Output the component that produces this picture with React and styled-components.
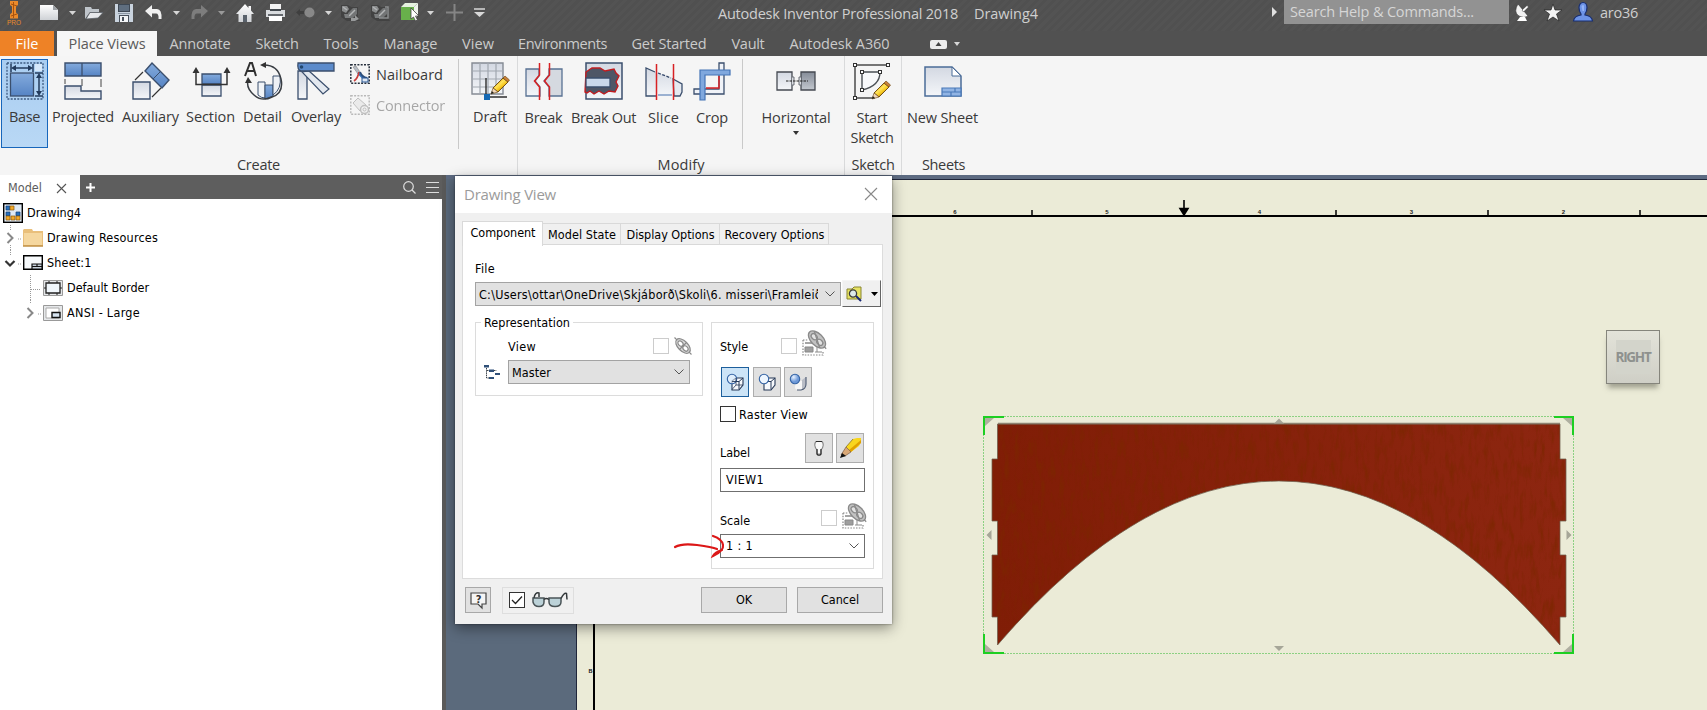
import React, { useLayoutEffect, useRef, useState } from "react";
import styled, { createGlobalStyle, css } from "styled-components";

const uiFont = '"Open Sans", "Noto Sans", sans-serif';
const dialogFont = '"DejaVu Sans Condensed", "DejaVu Sans", sans-serif';

const GlobalStyle = createGlobalStyle`
  *, *::before, *::after { box-sizing: border-box; }
  body { margin: 0; background: #5b6a7c; overflow: hidden; }
  svg { display: block; flex: none; overflow: visible; }
`;

/* ---------- text that is tracked to an exact width ---------- */
const TextBox = styled.span`
  display: block;
  flex: none;
  white-space: pre;
  width: ${(p) => p.$w}px;
  line-height: 18px;
`;

function Text({ w, children }) {
  const ref = useRef(null);
  const [spacing, setSpacing] = useState(0);
  useLayoutEffect(() => {
    const range = document.createRange();
    range.selectNodeContents(ref.current);
    const natural = range.getBoundingClientRect().width;
    setSpacing((w - natural) / String(children).length);
  }, [w, children]);
  return (
    <TextBox ref={ref} $w={w} style={{ letterSpacing: `${spacing}px` }}>
      {children}
    </TextBox>
  );
}

/* ---------- application frame ---------- */
const Window = styled.div`
  position: relative;
  display: flex;
  flex-direction: column;
  width: 1707px;
  height: 710px;
  overflow: hidden;
  font-family: ${uiFont};
`;

const TitleBar = styled.header`
  display: flex;
  height: 31px;
  background: repeating-linear-gradient(135deg, #505050 0 3px, #535353 3px 6px);
  color: #cfcfcf;
  font-size: 14.5px;
`;

const QuickAccess = styled.div`
  display: flex;
  align-items: center;
  width: 718px;
  height: 25px;
`;

const Tool = styled.span`
  display: flex;
  flex: none;
  align-items: center;
  justify-content: center;
  margin-left: ${(p) => p.$gap}px;
  width: ${(p) => p.$w}px;
`;

const Caption = styled.div`
  display: flex;
  gap: 16px;
  width: 554px;
  padding-top: 5px;
`;

const SearchBox = styled.div`
  width: 225px;
  height: 24px;
  margin: 0 6px 0 7px;
  padding: 3px 0 0 6px;
  background: #929292;
  color: #d6d6d6;
`;

const UserName = styled.div`
  padding: 4px 0 0 7px;
`;

const IconSlot = styled.span`
  display: block;
  padding-top: ${(p) => p.$top}px;
  margin-right: ${(p) => p.$after || 0}px;
`;

const TabBar = styled.nav`
  display: flex;
  height: 25px;
  background: #515151;
`;

const RibbonTab = styled.div`
  display: flex;
  justify-content: center;
  align-items: center;
  width: ${(p) => p.$w}px;
  height: 25px;
  padding-bottom: 0;
  font-size: 14.5px;
  color: #cbcbcb;
  ${(p) => p.$kind === "file" && css`background: #ee8226; color: #fff; margin-right: 3px;`}
  ${(p) => p.$kind === "active" && css`background: #f6f6f6; color: #5a5a5a;`}
`;

const RibbonMinimize = styled.div`
  display: flex;
  align-items: center;
  gap: 7px;
  padding: 1px 0 0 28px;
`;

const Ribbon = styled.section`
  display: flex;
  height: 119px;
  background: #f5f5f5;
  color: #3a3a3a;
  font-size: 14.5px;
`;

const Panel = styled.div`
  display: flex;
  flex-direction: column;
  align-items: center;
  width: ${(p) => p.$w}px;
  border-right: ${(p) => (p.$last ? "0" : "1px solid #d9dadb")};
`;

const PanelTools = styled.div`
  display: flex;
  align-items: flex-start;
  width: 100%;
  height: 100px;
  padding: 3px 0 0 ${(p) => p.$left || 0}px;
`;

const Separator = styled.i`
  width: 1px;
  height: 90px;
  margin-left: ${(p) => p.$gap}px;
  background: #c9c9c9;
`;

const BigButton = styled.div`
  display: flex;
  flex: none;
  flex-direction: column;
  align-items: center;
  width: ${(p) => p.$w}px;
  height: 89px;
  margin-left: ${(p) => p.$gap || 0}px;
  padding-top: 2px;
  border: 1px solid transparent;
  ${(p) => p.$active && css`background: linear-gradient(#a9cdf1, #b9d8f5); border-color: #1766bb;`}
`;

const IconFrame = styled.span`
  display: flex;
  align-items: center;
  height: 38px;
  margin-bottom: 8px;
`;

const SecondLine = styled.span`
  margin-top: 2px;
`;

const SmallTools = styled.div`
  display: flex;
  flex-direction: column;
  gap: 11px;
  padding: 5px 0 0 5px;
`;

const SmallButton = styled.div`
  display: flex;
  align-items: center;
  gap: 6px;
  height: 20px;
  opacity: ${(p) => (p.$disabled ? 0.42 : 1)};
`;

const Workspace = styled.main`
  display: flex;
  height: 535px;
`;

/* ---------- model browser ---------- */
const Browser = styled.aside`
  width: 446px;
  border-right: 4px solid #5a5a5a;
  background: #fff;
  color: #000;
  font: 12.5px ${dialogFont};
`;

const BrowserHead = styled.div`
  display: flex;
  align-items: center;
  height: 24px;
  padding-right: 3px;
  background: #5e5e5e;
`;

const BrowserTab = styled.div`
  display: flex;
  align-items: center;
  gap: 15px;
  width: 80px;
  height: 24px;
  margin-right: 6px;
  padding: 1px 0 0 8px;
  background: #fff;
  color: #5c5c5c;
`;

const Spacer = styled.span`
  flex: 1;
`;

const Tree = styled.div`
  padding-top: 1px;
`;

const TreeRow = styled.div`
  display: flex;
  align-items: center;
  gap: 4px;
  height: 25px;
  padding-left: ${(p) => p.$indent}px;
`;

const Twisty = styled.span`
  display: flex;
  align-items: center;
  width: 16px;
  height: 25px;
  margin-right: -4px;
`;

/* ---------- drawing canvas ---------- */
const Canvas = styled.div`
  position: relative;
  width: 1261px;
  height: 535px;
  background: #5b6a7c;
`;

const ViewCube = styled.div`
  position: absolute;
  left: 1160px;
  top: 155px;
  display: flex;
  align-items: center;
  justify-content: center;
  width: 54px;
  height: 54px;
  border: 1px solid #85857c;
  background: linear-gradient(#e3e3d9, #cfcfc6);
  box-shadow: 0 6px 5px -2px rgba(90, 90, 75, 0.5);
  color: #8e918e;
  font: bold 13.5px ${uiFont};
`;

const CubeFace = styled.span`
  display: flex;
  align-items: center;
  justify-content: center;
  width: 35px;
  height: 34px;
  background: #d3d4cb;
`;

/* ---------- drawing view dialog ---------- */
const Dialog = styled.div`
  position: absolute;
  left: 455px;
  top: 176px;
  width: 437px;
  height: 448px;
  background: #f0f0f0;
  box-shadow: 0 4px 13px rgba(0, 0, 0, 0.42), 0 0 2px rgba(0, 0, 0, 0.45);
  color: #000;
  font: 12.5px ${dialogFont};
`;

const DialogTitle = styled.div`
  display: flex;
  justify-content: space-between;
  height: 37px;
  padding: 9px 15px 0 9px;
  background: #fff;
  color: #9b9b9b;
  font: 15px ${uiFont};
`;

const DialogTabs = styled.div`
  display: flex;
  align-items: flex-end;
  height: 32px;
  padding: 8px 0 0 7px;
`;

const DialogTab = styled.div`
  display: flex;
  justify-content: center;
  width: ${(p) => p.$w}px;
  height: 22px;
  padding: 2px 0 0 1px;
  border: 1px solid #d9d9d9;
  border-left-width: 0;
  ${(p) => p.$active && css`
    height: 25px;
    margin-bottom: -1px;
    border-left-width: 1px;
    border-bottom: 0;
    background: #fff;
    z-index: 1;
  `}
`;

const DialogPage = styled.div`
  display: flex;
  flex-direction: column;
  width: 421px;
  height: 335px;
  margin: -1px 0 0 7px;
  padding: 15px 0 0 12px;
  border: 1px solid #dcdcdc;
  background: #fff;
`;

const FileRow = styled.div`
  display: flex;
  align-items: center;
  gap: 1px;
  margin-top: 2px;
  height: 27px;
`;

const Field = styled.div`
  display: flex;
  align-items: center;
  justify-content: space-between;
  width: ${(p) => p.$w}px;
  height: 24px;
  padding: 0 5px 0 ${(p) => (p.$plain ? 5 : 3)}px;
  border: 1px solid ${(p) => (p.$plain ? "#6f6f6f" : "#a3a3a3")};
  background: ${(p) => (p.$plain ? "#fff" : "#e1e1e1")};
`;

const PathClip = styled.span`
  width: 339px;
  padding-top: 2px;
  overflow: hidden;
`;

const BrowseButton = styled.div`
  display: flex;
  align-items: center;
  justify-content: space-between;
  width: 39px;
  height: 27px;
  padding: 0 2px 0 4px;
  border: 1px solid #f5f5f5;
  border-right-color: #646464;
  border-bottom-color: #646464;
  background: #f0f0f0;
`;

const Groups = styled.div`
  display: flex;
  align-items: flex-start;
  gap: 8px;
  margin-top: 15px;
`;

const Group = styled.div`
  width: ${(p) => p.$w}px;
  height: ${(p) => p.$h}px;
  padding-left: ${(p) => p.$left}px;
  border: 1px solid #dcdcdc;
`;

const Legend = styled.div`
  width: 92px;
  margin-top: -9px;
  padding-left: 3px;
  background: #fff;
`;

const Line = styled.div`
  display: flex;
  align-items: center;
  gap: ${(p) => p.$gap || 0}px;
  height: ${(p) => p.$h}px;
  margin-top: ${(p) => p.$top || 0}px;
  margin-left: ${(p) => p.$left || 0}px;
`;

const Check = styled.span`
  display: flex;
  flex: none;
  align-items: center;
  justify-content: center;
  width: 16px;
  height: 16px;
  margin-left: ${(p) => p.$left || 0}px;
  margin-right: ${(p) => p.$right || 0}px;
  border: 1px solid ${(p) => (p.$dim ? "#cccccc" : "#333")};
  background: #fff;
`;

const ToolButton = styled.span`
  display: flex;
  flex: none;
  align-items: center;
  justify-content: center;
  width: 28px;
  height: 30px;
  border: 1px solid #adadad;
  background: #e1e1e1;
  ${(p) => p.$active && css`border-color: #1d5f9c; background: #cce4f7;`}
`;

const DialogFooter = styled.div`
  display: flex;
  align-items: center;
  height: 26px;
  margin: 8px 0 0 10px;
`;

const PreviewToggle = styled.div`
  display: flex;
  flex: none;
  align-items: center;
  width: 72px;
  height: 27px;
  margin: 0 127px 0 1px;
  padding-left: 6px;
  border: 1px solid #dedede;
`;

const PushButton = styled.div`
  display: flex;
  flex: none;
  align-items: center;
  justify-content: center;
  width: ${(p) => p.$w}px;
  height: 26px;
  margin-right: 10px;
  border: 1px solid #a8a8a8;
  background: #e1e1e1;
`;

const RedMark = styled.span`
  position: absolute;
  left: 218px;
  top: 358px;
`;

/* ---------- icons ---------- */
const Svg = ({ w, h, children, ...rest }) => (
  <svg width={w} height={h} viewBox={`0 0 ${w} ${h}`} fill="none" {...rest}>{children}</svg>
);

const DefsSvg = styled.svg`
  position: absolute;
`;

const Defs = () => (
  <DefsSvg width="0" height="0">
    <defs>
      <linearGradient id="blue" x2="0" y2="1"><stop stopColor="#84abdd" /><stop offset="1" stopColor="#5684c4" /></linearGradient>
      <linearGradient id="gray" x2="0" y2="1"><stop stopColor="#d3d8e2" /><stop offset="1" stopColor="#f4f6f9" /></linearGradient>
      <linearGradient id="dark" x2="0" y2="1"><stop stopColor="#858c98" /><stop offset="1" stopColor="#c3c8cf" /></linearGradient>
      <linearGradient id="silver" x2="0" y2="1"><stop stopColor="#ffffff" /><stop offset="1" stopColor="#cfd2d6" /></linearGradient>
      <linearGradient id="gold" x1=".25" y1=".25" x2=".75" y2=".8"><stop stopColor="#e0a008" /><stop offset=".35" stopColor="#ffe45c" /><stop offset=".65" stopColor="#f7c81e" /><stop offset="1" stopColor="#8f5c05" /></linearGradient>
      <radialGradient id="ball" cx=".35" cy=".3"><stop stopColor="#e8f2ff" /><stop offset="1" stopColor="#6c98d8" /></radialGradient>
    </defs>
  </DefsSvg>
);

const ink = "#3b4f6d";
const Caret = ({ c = "#d6d6d6", w = 7 }) => <Svg w={w} h={4}><path d={`M0 0H${w}L${w / 2} 4Z`} fill={c} /></Svg>;
const Chevron = () => <Svg w={10} h={6}><path d="M.5.5 5 5 9.5.5" stroke="#555" /></Svg>;

const Logo = () => (
  <Svg w={14} h={25}>
    <path d="M3 1h8v4L9 6.500v6l2 2v4H3v-4l2-2v-6L3 5Z" fill="#e98a2b" />
    <path d="M6.500 2v16M4 4l6 2M4 16l6-2" stroke="#a7520d" />
    <text x="7" y="25" textAnchor="middle" fontSize="6.5" textLength="14" fontFamily="Liberation Sans" fill="#e98a2b">PRO</text>
  </Svg>
);
const NewFile = () => <Svg w={18} h={15}><path d="M0 0h13l5 5v10H0Z" fill="url(#silver)" /><path d="M13 0v5h5" fill="#9da1a6" /></Svg>;
const OpenFile = () => <Svg w={18} h={14}><path d="M0 13V1h6l1 2h7v3H5Z" fill="#bfc5cb" /><path d="M1 13 5 6.5h13L13 12Z" fill="#e6e8eb" stroke="#555b63" strokeWidth=".7" /></Svg>;
const Save = () => <Svg w={18} h={18}><path d="M0 0h18v18H0Z" fill="#c9d3de" /><path d="M3 0h12v8H3Z" fill="#3e4854" /><path d="M4 1h10v6H4Z" fill="#5f6e7f" /><path d="M3 9h12v1H3Z" fill="#8b97a5" /><path d="M4 11h10v7H4Z" fill="#48515c" /><path d="M5 12h8v6H5Z" fill="#f3f5f7" /><path d="M7 13h2v4H7Z" fill="#48515c" /></Svg>;
const Undo = ({ c = "#f0f0f0", flip }) => <Svg w={17} h={15}><g transform={flip ? "matrix(-1 0 0 1 17 0)" : undefined}><path d="M0 6 7 0v4h5q5 0 4.500 10h-3Q14 8.500 11 8.500H7v4Z" fill={c} /></g></Svg>;
const Home = () => <Svg w={18} h={18}><path d="M9 0 0 10h2.500v8h13v-8H18l-3-3.500V2h-2.500v2Z" fill="url(#silver)" /><path d="M7 11h4v7H7Z" fill="#59616b" /></Svg>;
const Print = () => <Svg w={19} h={17}><path d="M4 0h11v5H4Z" fill="#f3f3f3" /><path d="M0 6h19v7H0Z" fill="#d9dcdf" /><path d="M4 5h11v2H4Z" fill="#43494f" /><path d="M3 12h13v5H3Z" fill="#fff" /><path d="M2 11h15" stroke="#3d4247" strokeWidth="1.500" /></Svg>;
const Record = () => <Svg w={19} h={11}><path d="M0 5.500 4 2v2h4v3H4v2Z" fill="#3f3f3f" /><circle cx="13.500" cy="5.500" r="5" fill="#888" /></Svg>;
const Update = ({ plain }) => (
  <Svg w={19} h={17}>
    <path d="M0 1h7l3 2h7v10l2 4H6l-6-4Z" fill="#424242" />
    <path d="M1 2h5l2 3-3 4-4-2Z" fill="#8a8c8d" /><path d="m7 9 5-5h4v6l-4 4H6Z" fill="#727475" />
    <path d="m8 12 6-6M2 3l4 3" stroke="#b3b5b6" strokeWidth="1.500" /><path d="M3 10h4l2 4H4Z" fill="#7c7e7f" />
    {plain ? <path d="M14 3h3v11H8" stroke="#8b8d8e" strokeWidth="1.500" /> : <path d="M10 14h4v-3l4 4-4 2h-4Z" fill="#989a9b" />}
  </Svg>
);
const Cube = () => (
  <Svg w={19} h={19}>
    <path d="m1 4 4-4h13l-4 4Z" fill="#e5f1df" /><path d="m14 4 4-4v12l-4 5Z" fill="#eef3ec" /><path d="M1 4h13v13H1Z" fill="#68b04b" />
    <path d="M11 5v11l2.500-2 2 4 2-1-2-4h3.500Z" fill="#fff" stroke="#444" strokeWidth=".8" />
  </Svg>
);
const Plus = () => <Svg w={17} h={17}><path d="M8.500 0v17M0 8.500h17" stroke="#858585" strokeWidth="2" /></Svg>;
const More = () => <Svg w={11} h={9}><path d="M0 1h11" stroke="#d8d8d8" strokeWidth="1.500" /><path d="M0 4h11L5.500 9Z" fill="#d8d8d8" /></Svg>;
const Dish = () => (
  <Svg w={15} h={18}>
    <path d="M3 1Q-2 9 4 13q5 3 9 0Z" fill="#f2f2f2" stroke="#222" strokeWidth=".5" />
    <path d="m7 7 5-4.500 1.500 1.500L8.500 9Z" fill="#fff" stroke="#333" strokeWidth=".5" />
    <path d="M5 14h5l2 4H2Z" fill="#fff" />
  </Svg>
);
const Star = () => <Svg w={18} h={17}><path d="m9 0 2 6h7l-5.500 4L15 17l-6-4-6 4 2.500-7L0 6h7Z" fill="#f3f3f3" stroke="#222" strokeWidth=".7" /></Svg>;
const User = () => <Svg w={20} h={19}><path d="M6 5.500a4 5 0 0 1 8 0q0 4-2 6.500v1q7 1 7.500 6H.5Q1 14 8 13v-1Q6 9.500 6 5.500Z" fill="#6d93e6" stroke="#182e71" strokeWidth="1.200" /><path d="M8.500 4q2-2 2.500 0v5H9.500Z" fill="#94b4f6" /></Svg>;

const Pencil = ({ x = 0, y = 0 }) => (
  <g transform={`translate(${x} ${y})`}>
    <path d="M2 12 12 2l5 4-10 10Z" fill="url(#gold)" stroke="#67430b" strokeWidth=".9" />
    <path d="M2 12 7 16l-7 2Z" fill="#f1d6b8" stroke="#67430b" strokeWidth=".6" />
    <path d="m12 2 2-2 4.500 4L17 6Z" fill="#c9803a" stroke="#67430b" strokeWidth=".6" />
    <path d="m0 18 .8-3 2.200 2Z" fill="#222" />
  </g>
);

const BaseIcon = () => (
  <Svg w={38} h={38}>
    <rect x="1" y="1" width="36" height="36" stroke="#3d5a80" strokeWidth="1.300" strokeDasharray="2 1.300" />
    <rect x="29" y="2" width="7" height="7" fill="#d6e8fa" />
    <rect x="4.500" y="11" width="23" height="23" fill="url(#blue)" stroke={ink} strokeWidth="1.300" />
    <path d="M5 2v8M27 2v8M7 6h18M29 11h8M29 34h8M33 13v19" stroke="#233b5c" strokeWidth="1.500" />
    <path d="m5 6 5-3v6ZM27 6l-5-3v6ZM33 11l-3 5h6ZM33 34l-3-5h6Z" fill="#233b5c" />
  </Svg>
);
const ProjectedIcon = () => (
  <Svg w={38} h={38}>
    <path d="M1 1h36v13H1Z" fill="url(#blue)" stroke={ink} strokeWidth="1.400" /><path d="M18 1v13" stroke={ink} strokeWidth="1.300" />
    <path d="M1 17v5M18 17v7M37 17v8" stroke="#454545" /><path d="M1 24h16v5h20v8H1Z" fill="url(#gray)" stroke={ink} strokeWidth="1.400" />
  </Svg>
);
const AuxiliaryIcon = () => (
  <Svg w={38} h={38}>
    <path d="m20 1 17 17-7 8-17-17Z" fill="url(#blue)" stroke={ink} strokeWidth="1.400" /><path d="m28 10-7 7" stroke={ink} />
    <path d="M1 20h17v17H1Z" fill="url(#gray)" stroke={ink} strokeWidth="1.400" /><path d="m3 18 8-8M20 35l9-9" stroke="#333" strokeWidth="1.200" />
  </Svg>
);
const SectionIcon = () => (
  <Svg w={38} h={38}>
    <path d="M10 12h19v10H10Z" fill="url(#blue)" stroke={ink} strokeWidth="1.300" /><path d="M10 23h19v11H10Z" fill="url(#gray)" stroke={ink} strokeWidth="1.300" />
    <path d="M4 9v13.500h31V9" stroke="#333" strokeWidth="1.500" /><path d="m4 5 3.500 6h-7ZM35 5l3.500 6h-7Z" fill="#333" />
  </Svg>
);
const DetailIcon = () => (
  <Svg w={38} h={38}>
    <path d="M14 20h7v16q-4 0-7-3Z" fill="#f1f4f8" stroke={ink} /><path d="M21 23h8v11l-8 3Z" fill="url(#blue)" stroke={ink} /><path d="M29 14h7q2 13-7 19Z" fill="#edf0f5" stroke={ink} />
    <path d="M20 3q14 0 17 14t-9 18q-10 5-18-2T4 19" stroke="#383c42" strokeWidth="1.500" />
    <path d="m16 3 6-3v6ZM4 15l-3 6h7Z" fill="#333" />
    <path d="m1 14 5-13h2l4 13M3 9h7" stroke="#303030" strokeWidth="2" />
  </Svg>
);
const OverlayIcon = () => (
  <Svg w={38} h={38}>
    <path d="M1 9h9v28H1Z" fill="url(#gray)" stroke={ink} strokeWidth="1.300" />
    <path d="m5 10 7-1 20 18-6 5Z" fill="#e3e8ef" stroke={ink} strokeWidth="1.200" />
    <path d="M1 1h36v8H4Q0 8 1 1Z" fill="#5c8bcb" stroke={ink} strokeWidth="1.300" /><circle cx="4.500" cy="5" r="1.800" fill="#24486f" />
  </Svg>
);
const NailboardIcon = () => (
  <Svg w={20} h={20}>
    <rect x=".8" y=".8" width="18.400" height="18.400" stroke="#27303d" strokeWidth="1.500" strokeDasharray="2 1.300" />
    <path d="m3 3 3-1 4 6-2 2Z" fill="#b5bcc5" stroke="#777" strokeWidth=".5" /><path d="m8 9 8 8" stroke="#3672bc" strokeWidth="2" />
    <path d="M9 8q-1 6-5 9" stroke="#c83e3b" strokeWidth="1.600" /><path d="M10 8q2 5 7 6" stroke="#2b4d7b" strokeWidth="2" /><rect x="12" y="14" width="6" height="4" fill="#dce7f5" stroke="#2a5791" />
  </Svg>
);
const ConnectorIcon = () => (
  <Svg w={20} h={20}>
    <rect x=".8" y=".8" width="18.400" height="18.400" stroke="#686868" strokeWidth="1.400" strokeDasharray="2 1.300" />
    <path d="m3 8 5-5 8 7-6 6Z" fill="#ddd" stroke="#777" /><circle cx="14.500" cy="14.500" r="4" fill="#eee" stroke="#777" strokeWidth="1.500" /><circle cx="14.500" cy="14.500" r="1.500" stroke="#777" />
  </Svg>
);
const DraftIcon = () => (
  <Svg w={38} h={38}>
    <path d="M1 1h31v31H1Z" fill="url(#gray)" stroke="#858b94" strokeWidth="1.400" /><path d="M9 1v31M17 1v31M25 1v31M1 9h31M1 17h31M1 25h31" stroke="#a1a7b0" strokeWidth="1.200" />
    <path d="M15 16v19h21" stroke="#2e2e2e" strokeWidth="1.400" /><path d="M13 32h6v6h-6Z" fill="#1669b3" /><Pencil x={20} y={14} />
  </Svg>
);
const BreakIcon = () => (
  <Svg w={38} h={38}>
    <path d="M1 7h13v7l-4 5 5 6v9H1Z" fill="url(#gray)" stroke="#587193" strokeWidth="1.300" /><path d="M24 7h13v27H24v-9l-5-6 5-6Z" fill="#d5d9e0" stroke="#587193" strokeWidth="1.300" />
    <path d="M14.500 1v12l-5 6 5 6v13M24.500 1v12l-5 6 5 6v13" stroke="#d82124" strokeWidth="1.500" />
  </Svg>
);
const BreakOutIcon = () => (
  <Svg w={38} h={38}>
    <path d="M1 1h36v36H1Z" fill="url(#gray)" stroke={ink} strokeWidth="1.500" />
    <path d="M1 10 7 6h8l5 3 9-2 2 4 3 3-3 6 2 4-3 6-6-1-5 3-5-3-5 3-4-3-3 2-2-1Z" fill="#4e5666" stroke="#c01c20" strokeWidth="1.400" />
    <path d="M1 16h24v9H1Z" fill="#c9d8eb" stroke={ink} strokeWidth="1.300" />
  </Svg>
);
const SliceIcon = () => (
  <Svg w={38} h={38}>
    <path d="m1 6 10 4v24H1ZM11 10l16 6v18H11Z" fill="url(#gray)" /><path d="M11 34H1V6l9 4" stroke={ink} strokeWidth="1.300" /><path d="m28 17 9 5v8l-2 4h-6Z" fill="#e5e9f0" stroke={ink} strokeWidth="1.300" />
    <path d="m13 11 13 5" stroke="#35486a" strokeWidth="1.300" strokeDasharray="3 1.500" /><path d="M13 33h14" stroke="#9bb1d1" strokeWidth="2" />
    <path d="M11.500 2v36M28.500 2v36" stroke="#d82124" strokeWidth="1.500" />
  </Svg>
);
const CropIcon = () => (
  <Svg w={38} h={38}>
    <path d="M26 1h5v31H1v-5h25Z" fill="#f0f3f8" stroke={ink} strokeWidth="1.300" /><path d="M26 14v12H13" stroke="#d82124" strokeWidth="1.500" />
    <path d="M7 38V8h30v5H12v25Z" fill="#80a8de" stroke="#4474b6" strokeWidth="1.200" />
  </Svg>
);
const HorizontalIcon = () => (
  <Svg w={40} h={22}>
    <path d="M1 2h15v18H1Z" fill="url(#gray)" stroke="#454a52" strokeWidth="1.300" /><path d="M25 2h14v18H25Z" fill="url(#dark)" stroke="#454a52" strokeWidth="1.300" />
    <path d="M16 7h2v8h-2M25 7h-2v8h2" fill="#d9dce1" stroke="#6a6f77" /><path d="M10 11h22" stroke="#222" strokeWidth="1.200" strokeDasharray="2.500 1" />
  </Svg>
);
const SketchIcon = () => (
  <Svg w={38} h={38}>
    <path d="M2 3h33M2 3v33h20" stroke="#4b4b4b" strokeWidth="1.500" /><path d="M9 10h18q0 14-18 18Z" fill="#f7f8fa" stroke="#4b5055" strokeWidth="1.400" />
    {[[2, 3], [35, 3], [2, 36], [9, 10], [27, 10], [9, 28]].map(([x, y]) => <rect key={`${x}-${y}`} x={x - 1.5} y={y - 1.5} width="3" height="3" fill="#fff" stroke="#333" />)}
    <Pencil x={19} y={19} />
  </Svg>
);
const SheetIcon = () => (
  <Svg w={38} h={38}>
    <path d="M1 5h27l9 9v20H1Z" fill="url(#gray)" stroke="#4b6c98" strokeWidth="1.500" /><path d="M28 5v9h9Z" fill="#fff" stroke="#4b6c98" />
    <path d="M18 26h19v8H18ZM18 30h19M31 26v4M27 30v4" fill="#91b4e4" stroke="#4978b7" strokeWidth="1.200" />
  </Svg>
);

const DrawingIcon = () => (
  <Svg w={20} h={20}>
    <rect x=".7" y=".7" width="18.600" height="18.600" fill="#dfe9f3" stroke="#000" strokeWidth="1.400" />
    <path d="M3 3h4v4H3ZM3 9h4v4H3ZM13 9h4v4h-4Z" fill="#2770bd" stroke="#143e70" strokeWidth=".7" />
    <path d="M7 3h4v4H7ZM3 13h4v4H3ZM8 13h4v4H8ZM13 13h4v4h-4Z" fill="#f2a929" stroke="#8b570c" strokeWidth=".7" />
  </Svg>
);
const FolderIcon = () => <Svg w={20} h={19}><path d="M0 18V2l1-1h8l1 2h10v15Z" fill="#e9bf7b" /><path d="M1 5h18v12H1Z" fill="#f5d79f" /><path d="M0 18h20" stroke="#c09044" strokeWidth="1.500" /></Svg>;
const TreeSheetIcon = () => <Svg w={20} h={15}><path d="M.7.7h18.600v13.600H.7Z" fill="#f6f9fb" stroke="#000" strokeWidth="1.400" /><path d="M9 9h10v5H9ZM9 11.500h10M14 9v2.500" fill="#c6d0db" stroke="#111" strokeWidth="1.200" /></Svg>;
const BorderIcon = () => <Svg w={20} h={16}><path d="M.5.5h19v15H.5Z" fill="#e5e7e9" stroke="#999" /><path d="M3 3h14v10H3Z" fill="#f0f6fb" stroke="#222" strokeWidth="1.300" /><path d="M6 1v2M14 1v2M6 13v2M14 13v2M1 8h2M17 8h2" stroke="#222" /></Svg>;
const TitleBlockIcon = () => <Svg w={20} h={16}><path d="M.5.5h19v15H.5Z" fill="#e5e7e9" stroke="#999" /><path d="M3 3h13v10H3Z" fill="#fff" stroke="#aaa" /><path d="M9 7.500h8v5H9Z" fill="#d6e3ef" stroke="#111" strokeWidth="1.400" /></Svg>;

const LinkIcon = () => (
  <Svg w={18} h={18}>
    <g transform="rotate(45 9 9)" stroke="#8a8a8a" strokeWidth="1.200">
      <ellipse cx="9" cy="9" rx="9" ry="5" fill="#dcdcdc" /><ellipse cx="5.500" cy="9" rx="3" ry="2.200" fill="#fff" /><ellipse cx="12.500" cy="9" rx="3" ry="2.200" fill="#fff" />
      <path d="M-3 9h4M17 9h4M9 4v10" />
    </g>
  </Svg>
);
const StyleLinkIcon = () => (
  <Svg w={25} h={25}>
    <path d="M1 9v15h20v-4M1 9h5" stroke="#858585" strokeWidth="1.200" strokeDasharray="1.500 1.300" />
    <path d="M3 12h9" stroke="#a5a5a5" strokeWidth="2" /><path d="M3 16h8v5H3Z" fill="#9e9e9e" stroke="#888" /><path d="M15 15v6M13 21h7" stroke="#8b8b8b" />
    <g transform="rotate(45 15 8.5)" stroke="#8a8a8a" strokeWidth="1.300">
      <ellipse cx="15" cy="8.500" rx="10.500" ry="6" fill="#c2c2c2" /><ellipse cx="11" cy="8.500" rx="3.500" ry="2.500" fill="#e2e2e2" /><ellipse cx="19" cy="8.500" rx="3.500" ry="2.500" fill="#e2e2e2" />
      <path d="M25 8.500h3M8 5l14 7" />
    </g>
  </Svg>
);
const RepIcon = () => <Svg w={17} h={16}><path d="M0 1h5v2.500H0ZM5 5.500h5V8H5ZM11 9h5v2h-5ZM5 13h5v2H5Z" fill="#2f4f78" /><path d="M2.500 4v10H5M3 6.500h2M10 6.500h2.500" stroke="#3a4048" strokeDasharray="1.500 .7" /></Svg>;
const StyleIcon = ({ kind }) => (
  <Svg w={18} h={18}>
    {kind === "shaded"
      ? <><path d="M7 8h6v9H9q-3 0-3-3Z" fill="#f6f6f6" /><path d="M13 7 17 4v8q-1 3-4 5Z" fill="#b9bdc6" /><path d="M8 17h4q5-1 5-6V4" stroke="#4c5a72" strokeWidth="1.100" /></>
      : <><path d="m6 8 4-3h7v7l-4 5H6Z" fill="#f7f9fc" stroke="#273957" strokeWidth="1.100" /><path d="M6 8.500h7v8M13 8.500 17 5" stroke="#273957" /></>}
    <circle cx="6" cy="6" r="4.700" fill={kind === "shaded" ? "url(#ball)" : "#edf5fe"} fillOpacity={kind === "hidden" ? 0.6 : 1} stroke="#3564a5" strokeWidth="1.100" />
    {kind === "hidden" && <path d="M6 16.500 10 12h7M10 5v7M6 8.500h7" stroke="#273957" strokeWidth=".8" />}
  </Svg>
);
const BulbIcon = () => <Svg w={12} h={16}><path d="M4 10Q0 5 3 1.500h6q3 3.500-1 8.500v4H4Z" fill="#f9f9f9" stroke="#8a8a8a" strokeWidth="1.200" /><path d="M4 9v5l1 1.200h2L8 14V9M3 1.500h6" stroke="#2c2c2c" strokeWidth="1.200" /></Svg>;
const EditIcon = () => (
  <Svg w={22} h={22}>
    <path d="M7 10 14 2l4-1h4v4l-2 4-8 6Z" fill="#f8d61e" /><path d="m12 15 10-9V3L10 13Z" fill="#e0a100" /><path d="m7 10 5 5-6 4-4-1Z" fill="#d9a877" stroke="#6a4a30" strokeWidth=".6" /><path d="m1 21 2-5 4 3Z" fill="#111" /><path d="m7 10 7-8" stroke="#7a6610" strokeWidth=".7" />
  </Svg>
);
const FindIcon = () => <Svg w={15} h={14}><path d="M0 2h5l2-2h7v12H0Z" fill="#e6e263" stroke="#888531" /><circle cx="6" cy="6.500" r="3.600" fill="#dce9ea" stroke="#3b3b3b" strokeWidth="1.300" /><path d="m9 9 5 5" stroke="#182773" strokeWidth="2" /></Svg>;
const HelpIcon = () => <Svg w={17} h={17}><path d="M1 1h15v11h-4v4l-4-4H1Z" fill="#f5f5f5" stroke="#444" strokeWidth="1.200" /><text x="8.500" y="11" textAnchor="middle" fontSize="11" fontWeight="bold" fontFamily="DejaVu Sans Condensed" fill="#333">?</text></Svg>;
const GlassesIcon = () => (
  <Svg w={36} h={16}>
    <path d="M1 6h11v4q0 4.500-5 4.500T1 10ZM17 6h12v4q0 4.500-6 4.500T17 10Z" fill="#bcd2d8" stroke="#4a5457" strokeWidth="1.500" /><path d="M12 7.500q2-2 5 0M2 6q1-6 5-5v4M29 6.500q3-6 5.500-5l.5 6" stroke="#32383a" strokeWidth="1.500" />
  </Svg>
);

const SheetDrawing = () => {
  const ticks = [1032, 1336, 1488, 1640];
  const zones = [[955, "6"], [1107, "5"], [1259.5, "4"], [1411.5, "3"], [1563.5, "2"]];
  const board = "M997.5 424H1560V459H1566V521H1560V555H1566V617H1560V645Q1279 317 997.500 645V617H992V555H997.500V521H992V459H997.500Z";
  return (
    <svg width="1261" height="535" viewBox="446 175 1261 535" fill="none">
      <defs>
        <filter id="grain" x="0" y="0" width="1" height="1">
          <feTurbulence type="fractalNoise" baseFrequency="0.2 0.05" numOctaves="4" seed="8" />
          <feColorMatrix values="0 0 0 0 .2  0 0 0 0 .02  0 0 0 0 0  2.800 0 0 0 -1.350" />
        </filter>
        <linearGradient id="wood" x2="1"><stop stopColor="#801d06" /><stop offset="1" stopColor="#8d2610" /></linearGradient>
        <clipPath id="boardClip"><path d={board} /></clipPath>
      </defs>
      <path d="M446 175H1707V179H446Z" fill="#5d6b82" />
      <path d="M576 179H1707V710H576Z" fill="#ebebd7" />
      <path d="M576.500 710V179.500H1707" stroke="#20263a" />
      <path d="M594 710V216H1707" stroke="#000" strokeWidth="2" />
      {ticks.map((x) => <path key={x} d={`M${x} 210V216`} stroke="#000" strokeWidth="1.500" />)}
      {zones.map(([x, n]) => <text key={n} x={x} y="213.500" textAnchor="middle" fontFamily="Liberation Sans" fontSize="6" fontWeight="bold" fill="#222">{n}</text>)}
      <text x="590.500" y="673" textAnchor="middle" fontFamily="Liberation Sans" fontSize="5.500" fontWeight="bold" fill="#111">B</text>
      <path d="M1184 200V216M1180 208.500H1188L1184 215Z" fill="#000" stroke="#000" strokeWidth="1.600" />
      <path d={board} fill="url(#wood)" />
      <g clipPath="url(#boardClip)"><rect x="990" y="422" width="578" height="226" filter="url(#grain)" opacity=".75" /></g>
      <path d={board} stroke="#6d5d4c" strokeOpacity=".75" />
      <path d="M998 423.500H1560" stroke="#8d8271" strokeWidth="1.500" />
      <rect x="983.500" y="416.500" width="590" height="237" stroke="#2db52d" strokeDasharray="1 2" />
      <path d="M985 418h9l-9 8ZM1572 418h-9l9 8ZM985 652h9l-9-8ZM1572 652h-9l9-8Z" fill="#afafa0" />
      <path d="M1279 418.500l5 5h-10ZM1279 651l5-5h-10ZM986.500 535l5-5v10ZM1571.500 535l-5-5v10Z" fill="#a6a698" />
      <path d="M984 435V417H1004M1554 417H1573V435M1573 634V653H1554M1004 653H984V634" stroke="#1dcf22" strokeWidth="2" />
    </svg>
  );
};

/* ---------- page ---------- */
const Ribbons = () => (
  <Ribbon>
    <Panel $w={518}>
      <PanelTools $left={1}>
        <BigButton $w={47} $active><IconFrame><BaseIcon /></IconFrame><Text w={31}>Base</Text></BigButton>
        <BigButton $w={70}><IconFrame><ProjectedIcon /></IconFrame><Text w={62}>Projected</Text></BigButton>
        <BigButton $w={65}><IconFrame><AuxiliaryIcon /></IconFrame><Text w={57}>Auxiliary</Text></BigButton>
        <BigButton $w={55}><IconFrame><SectionIcon /></IconFrame><Text w={49}>Section</Text></BigButton>
        <BigButton $w={49}><IconFrame><DetailIcon /></IconFrame><Text w={39}>Detail</Text></BigButton>
        <BigButton $w={58}><IconFrame><OverlayIcon /></IconFrame><Text w={50}>Overlay</Text></BigButton>
        <SmallTools>
          <SmallButton><NailboardIcon /><Line $h={18} $top={1}><Text w={67}>Nailboard</Text></Line></SmallButton>
          <SmallButton $disabled><ConnectorIcon /><Line $h={18} $top={1}><Text w={69}>Connector</Text></Line></SmallButton>
        </SmallTools>
        <Separator $gap={13} />
        <BigButton $w={52} $gap={5}><IconFrame><DraftIcon /></IconFrame><Text w={34}>Draft</Text></BigButton>
      </PanelTools>
      <Text w={43}>Create</Text>
    </Panel>
    <Panel $w={327}>
      <PanelTools $left={2}>
        <BigButton $w={47}><IconFrame><BreakIcon /></IconFrame><Line $h={18} $top={1}><Text w={38}>Break</Text></Line></BigButton>
        <BigButton $w={73}><IconFrame><BreakOutIcon /></IconFrame><Line $h={18} $top={1}><Text w={65}>Break Out</Text></Line></BigButton>
        <BigButton $w={47}><IconFrame><SliceIcon /></IconFrame><Line $h={18} $top={1}><Text w={31}>Slice</Text></Line></BigButton>
        <BigButton $w={50}><IconFrame><CropIcon /></IconFrame><Line $h={18} $top={1}><Text w={32}>Crop</Text></Line></BigButton>
        <Separator $gap={5} />
        <BigButton $w={78} $gap={14}>
          <IconFrame><HorizontalIcon /></IconFrame><Line $h={18} $top={1}><Text w={69}>Horizontal</Text></Line>
          <Line $h={4} $top={4}><Caret c="#333" w={6} /></Line>
        </BigButton>
      </PanelTools>
      <Text w={47}>Modify</Text>
    </Panel>
    <Panel $w={57}>
      <PanelTools>
        <BigButton $w={54}><IconFrame><SketchIcon /></IconFrame><Line $h={18} $top={1}><Text w={31}>Start</Text></Line><SecondLine><Text w={43}>Sketch</Text></SecondLine></BigButton>
      </PanelTools>
      <Text w={43}>Sketch</Text>
    </Panel>
    <Panel $w={83} $last>
      <PanelTools>
        <BigButton $w={81}><IconFrame><SheetIcon /></IconFrame><Line $h={18} $top={1}><Text w={71}>New Sheet</Text></Line></BigButton>
      </PanelTools>
      <Text w={43}>Sheets</Text>
    </Panel>
  </Ribbon>
);

const ModelBrowser = () => (
  <Browser>
    <BrowserHead>
      <BrowserTab><Text w={34}>Model</Text><Line $h={12} $top={2}><Svg w={9} h={9}><path d="m0 0 9 9M9 0 0 9" stroke="#555" strokeWidth="1.100" /></Svg></Line></BrowserTab>
      <Svg w={9} h={9}><path d="M4.500 0v9M0 4.500h9" stroke="#fff" strokeWidth="2" /></Svg>
      <Spacer />
      <Svg w={13} h={13}><circle cx="5.500" cy="5.500" r="4.800" stroke="#ddd" strokeWidth="1.200" /><path d="m9 9 3.500 3.500" stroke="#ddd" strokeWidth="1.200" /></Svg>
      <Line $h={12} $left={10}><Svg w={13} h={11}><path d="M0 .5h13M0 5.500h13M0 10.500h13" stroke="#ddd" /></Svg></Line>
    </BrowserHead>
    <Tree>
      <TreeRow $indent={3}><DrawingIcon /><Text w={54}>Drawing4</Text></TreeRow>
      <TreeRow $indent={7}>
        <Twisty><Svg w={16} h={25}><path d="M3.500 0v5M3.500 20v5M11 14h4" stroke="#999" strokeDasharray="1 1" /><path d="m.5 8 5 5-5 5" stroke="#888" strokeWidth="2" /></Svg></Twisty>
        <FolderIcon /><Text w={111}>Drawing Resources</Text>
      </TreeRow>
      <TreeRow $indent={7}>
        <Twisty><Svg w={16} h={25}><path d="M3.500 0v5M11 14h4" stroke="#999" strokeDasharray="1 1" /><path d="m-1.500 11 4.500 4.500L7.500 11" stroke="#333" strokeWidth="2.200" /></Svg></Twisty>
        <TreeSheetIcon /><Text w={44.5}>Sheet:1</Text>
      </TreeRow>
      <TreeRow $indent={27}>
        <Twisty><Svg w={16} h={25}><path d="M3.500 0v25M4 14.500h10" stroke="#999" strokeDasharray="1 1" /></Svg></Twisty>
        <BorderIcon /><Text w={82}>Default Border</Text>
      </TreeRow>
      <TreeRow $indent={27}>
        <Twisty><Svg w={16} h={25}><path d="M3.500 0v4M11 14h4" stroke="#999" strokeDasharray="1 1" /><path d="m.5 8 5 5-5 5" stroke="#888" strokeWidth="2" /></Svg></Twisty>
        <TitleBlockIcon /><Text w={73}>ANSI - Large</Text>
      </TreeRow>
    </Tree>
  </Browser>
);

const DrawingViewDialog = () => (
  <Dialog>
    <DialogTitle>
      <Text w={92}>Drawing View</Text>
      <Line $h={12} $top={3}><Svg w={12} h={12}><path d="m0 0 12 12M12 0 0 12" stroke="#888" strokeWidth="1.100" /></Svg></Line>
    </DialogTitle>
    <DialogTabs>
      <DialogTab $w={81} $active><Text w={65}>Component</Text></DialogTab>
      <DialogTab $w={78}><Text w={68}>Model State</Text></DialogTab>
      <DialogTab $w={99}><Text w={88}>Display Options</Text></DialogTab>
      <DialogTab $w={109}><Text w={100}>Recovery Options</Text></DialogTab>
    </DialogTabs>
    <DialogPage>
      <Text w={20}>File</Text>
      <FileRow>
        <Field $w={366}><PathClip><Text w={343}>{"C:\\Users\\ottar\\OneDrive\\Skjáborð\\Skoli\\6. misseri\\Framleið"}</Text></PathClip><Chevron /></Field>
        <BrowseButton><FindIcon /><Caret c="#000" w={7} /></BrowseButton>
      </FileRow>
      <Groups>
        <Group $w={228} $h={74} $left={5}>
          <Legend><Text w={86}>Representation</Text></Legend>
          <Line $h={18} $top={5} $left={27}>
            <Line $h={18} $top={2}><Text w={28}>View</Text></Line><Check $dim $left={117} $right={5} /><LinkIcon />
          </Line>
          <Line $h={24} $top={5} $left={3} $gap={7}><RepIcon /><Field $w={182}><Line $h={18} $top={2}><Text w={39}>Master</Text></Line><Chevron /></Field></Line>
        </Group>
        <Group $w={163} $h={247} $left={8}>
          <Line $h={26} $top={10}>
            <Line $h={18} $top={2}><Text w={28}>Style</Text></Line><Check $dim $left={33} $right={5} /><Line $h={26} $top={-5}><StyleLinkIcon /></Line>
          </Line>
          <Line $h={30} $top={8} $left={1} $gap={3.5}>
            <ToolButton $active><StyleIcon kind="hidden" /></ToolButton>
            <ToolButton><StyleIcon kind="plain" /></ToolButton>
            <ToolButton><StyleIcon kind="shaded" /></ToolButton>
          </Line>
          <Line $h={18} $top={8} $gap={3}><Check /><Line $h={18} $top={2}><Text w={69}>Raster View</Text></Line></Line>
          <Line $h={30} $top={10}>
            <Line $h={30} $top={10}><Text w={30}>Label</Text></Line>
            <Line $h={30} $left={55} $gap={3}><ToolButton><BulbIcon /></ToolButton><ToolButton><EditIcon /></ToolButton></Line>
          </Line>
          <Line $h={24} $top={5}><Field $w={145} $plain><Text w={38}>VIEW1</Text></Field></Line>
          <Line $h={26} $top={13}>
            <Line $h={18} $top={5}><Text w={30}>Scale</Text></Line><Check $dim $left={71} $right={5} /><Line $h={26} $top={-4}><StyleLinkIcon /></Line>
          </Line>
          <Line $h={24} $top={3}><Field $w={145} $plain><Text w={27}>1 : 1</Text><Chevron /></Field></Line>
        </Group>
      </Groups>
    </DialogPage>
    <DialogFooter>
      <PushButton $w={26}><HelpIcon /></PushButton>
      <PreviewToggle><Check $right={7}><Svg w={10} h={8}><path d="m0 4 3.500 3.500L10 .5" stroke="#222" strokeWidth="1.300" /></Svg></Check><GlassesIcon /></PreviewToggle>
      <PushButton $w={86}><Text w={16}>OK</Text></PushButton>
      <PushButton $w={86}><Text w={38}>Cancel</Text></PushButton>
    </DialogFooter>
    <RedMark>
      <Svg w={52} h={26}><path d="M2 13Q9 9 24 11T44 15M40 2Q49 5 50 11T40 22Q42 18 49 16" stroke="#dc1717" strokeWidth="2.200" strokeLinecap="round" /></Svg>
    </RedMark>
  </Dialog>
);

const tabs = [
  ["Annotate", 86, 61], ["Sketch", 68, 43], ["Tools", 60, 35], ["Manage", 79, 54], ["View", 56, 32],
  ["Environments", 113, 89], ["Get Started", 100, 75], ["Vault", 58, 33], ["Autodesk A360", 125, 100],
];

const quickTools = [
  [7, 14, <Logo />], [19, 18, <NewFile />], [10, 8, <Caret />], [9, 18, <OpenFile />], [12, 18, <Save />], [12, 17, <Undo />],
  [11, 7, <Caret />], [11, 17, <Undo c="#7d7d7d" flip />], [10, 7, <Caret c="#9a9a9a" />], [11, 18, <Home />], [12, 19, <Print />],
  [11, 19, <Record />], [10, 7, <Caret />], [9, 19, <Update />], [11, 19, <Update plain />], [10, 19, <Cube />], [8, 7, <Caret />],
  [12, 17, <Plus />], [11, 11, <More />],
];

export default function App() {
  return (
    <Window>
      <GlobalStyle />
      <Defs />
      <TitleBar>
        <QuickAccess>
          {quickTools.map(([gap, w, icon], i) => <Tool key={i} $gap={gap} $w={w}>{icon}</Tool>)}
        </QuickAccess>
        <Caption><Text w={240}>Autodesk Inventor Professional 2018</Text><Text w={64}>Drawing4</Text></Caption>
        <IconSlot $top={7}><Svg w={5} h={10}><path d="m0 0 5 5-5 5Z" fill="#e0e0e0" /></Svg></IconSlot>
        <SearchBox><Text w={184}>Search Help &amp; Commands...</Text></SearchBox>
        <IconSlot $top={3} $after={14}><Dish /></IconSlot>
        <IconSlot $top={4} $after={11}><Star /></IconSlot>
        <IconSlot $top={2}><User /></IconSlot>
        <UserName><Text w={38}>aro36</Text></UserName>
      </TitleBar>
      <TabBar>
        <RibbonTab $w={54} $kind="file"><Text w={23}>File</Text></RibbonTab>
        <RibbonTab $w={100} $kind="active"><Text w={77}>Place Views</Text></RibbonTab>
        {tabs.map(([name, w, textWidth]) => <RibbonTab key={name} $w={w}><Text w={textWidth}>{name}</Text></RibbonTab>)}
        <RibbonMinimize>
          <Svg w={17} h={9}><rect width="17" height="9" rx="2" fill="#ececec" /><path d="m8.500 2 3 4h-6Z" fill="#444" /></Svg>
          <Caret w={6} />
        </RibbonMinimize>
      </TabBar>
      <Ribbons />
      <Workspace>
        <ModelBrowser />
        <Canvas>
          <SheetDrawing />
          <ViewCube><CubeFace><Text w={35}>RIGHT</Text></CubeFace></ViewCube>
        </Canvas>
      </Workspace>
      <DrawingViewDialog />
    </Window>
  );
}
